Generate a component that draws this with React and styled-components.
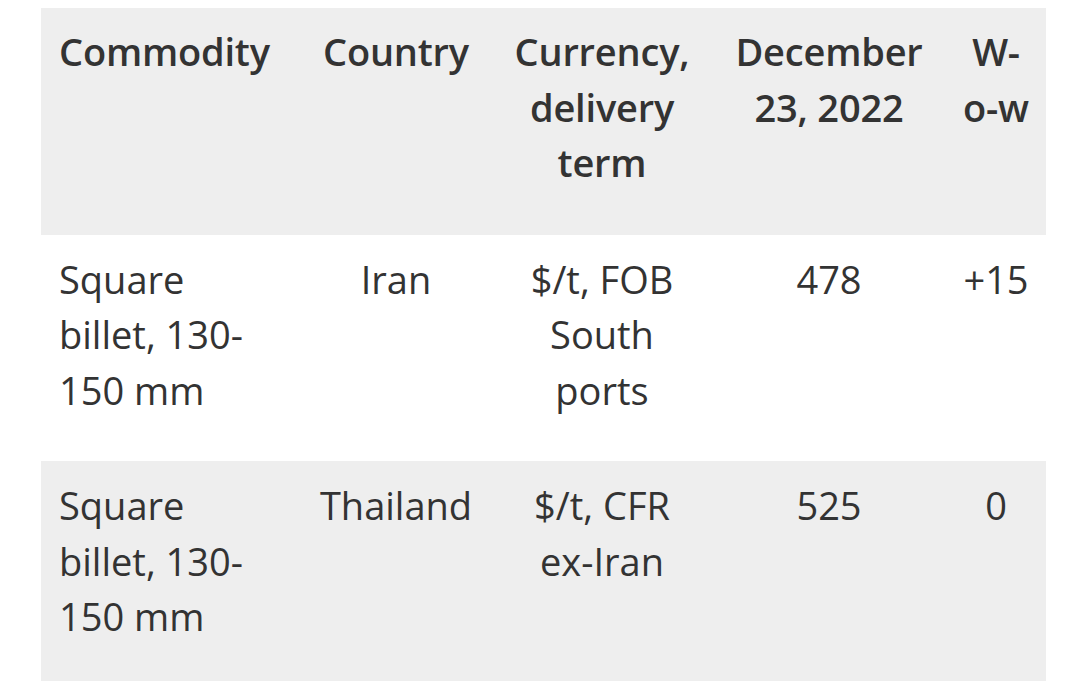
import React from "react";
import styled, { createGlobalStyle } from "styled-components";

const Global = createGlobalStyle`
  html, body { margin: 0; padding: 0; background: #ffffff; }
  body { font-family: "Open Sans", "Noto Sans", sans-serif; color: #333333; }
`;

const Page = styled.div`
  padding: 8px 34px 0 41px;
  height: 681px;
  box-sizing: border-box;
  overflow: hidden;
`;

const Table = styled.table`
  width: 1005px;
  border-collapse: collapse;
  table-layout: fixed;
  font-size: 38px;
  line-height: 55.5px;
`;

const Row = styled.tr`
  background: ${(p) => (p.$shaded ? "#eeeeee" : "#ffffff")};
`;

const Head = styled.th`
  font-weight: 600;
  vertical-align: top;
  text-align: ${(p) => (p.$left ? "left" : "center")};
  padding: ${(p) => (p.$left ? "16px 10px 44px 18px" : "16px 4px 44px 4px")};
  white-space: nowrap;
  letter-spacing: -0.2px;
`;

const Cell = styled.td`
  font-weight: 400;
  vertical-align: top;
  text-align: ${(p) => (p.$left ? "left" : "center")};
  padding: ${(p) => (p.$left ? "17px 10px 43px 18px" : "17px 4px 43px 4px")};
  white-space: nowrap;
`;

const widths = [259, 192, 220, 234, 100];

const rows = [
  [["Square", "billet, 130-", "150 mm"], ["Iran"], ["$/t, FOB", "South", "ports"], ["478"], ["+15"]],
  [["Square", "billet, 130-", "150 mm"], ["Thailand"], ["$/t, CFR", "ex-Iran"], ["525"], ["0"]],
];

const headers = [
  ["Commodity"],
  ["Country"],
  ["Currency,", "delivery", "term"],
  ["December", "23, 2022"],
  ["W-", "o-w"],
];

const Lines = ({ lines }) =>
  lines.map((l, i) => (
    <React.Fragment key={i}>
      {i > 0 && <br />}
      {l}
    </React.Fragment>
  ));

export default function App() {
  return (
    <>
      <Global />
      <Page>
        <Table>
          <colgroup>
            {widths.map((w, i) => (
              <col key={i} style={{ width: w }} />
            ))}
          </colgroup>
          <thead>
            <Row $shaded>
              {headers.map((h, i) => (
                <Head key={i} $left={i === 0}>
                  <Lines lines={h} />
                </Head>
              ))}
            </Row>
          </thead>
          <tbody>
            {rows.map((r, ri) => (
              <Row key={ri} $shaded={ri % 2 === 1}>
                {r.map((c, ci) => (
                  <Cell key={ci} $left={ci === 0}>
                    <Lines lines={c} />
                  </Cell>
                ))}
              </Row>
            ))}
          </tbody>
        </Table>
      </Page>
    </>
  );
}
